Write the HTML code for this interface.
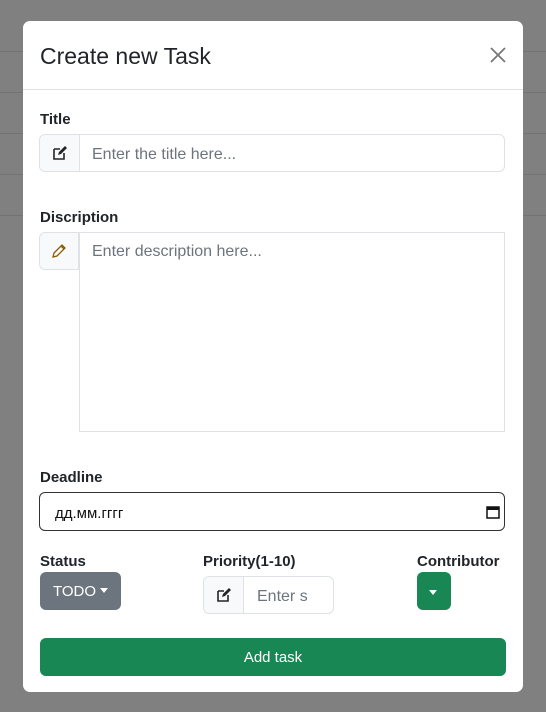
<!DOCTYPE html>
<html><head><meta charset="utf-8"><style>
*{box-sizing:border-box;margin:0;padding:0}
body{width:546px;height:712px;background:#808080;font-family:"Liberation Sans","DejaVu Sans",sans-serif;position:relative;overflow:hidden;color:#212529}
.ln{position:absolute;left:0;width:546px;height:1px;background:#737373}
.modal{position:absolute;left:23px;top:21px;width:500px;height:671px;background:#fff;border-radius:7px}
.a{position:absolute}
.lbl{position:absolute;font-weight:bold;font-size:15px;color:#212529}
.grp{position:absolute;border:1px solid #dee2e6;border-radius:6px;background:#fff}
.ico{position:absolute;left:0;top:0;bottom:0;width:40px;background:#f8f9fa;border-right:1px solid #dee2e6;border-radius:6px 0 0 6px;display:flex;align-items:center;justify-content:center}
.ph{position:absolute;color:#6c757d;font-size:16px}
</style></head><body>
<div class="ln" style="top:51px"></div><div class="ln" style="top:92px"></div><div class="ln" style="top:133px"></div><div class="ln" style="top:174px"></div><div class="ln" style="top:215px"></div>
<div class="modal">
 <div class="a" style="left:17px;top:22px;font-size:23px;color:#212529">Create new Task</div>
 <svg class="a" style="left:466px;top:25px" width="18" height="18" viewBox="0 0 18 18"><path d="M2 2L16 16M16 2L2 16" stroke="#777" stroke-width="1.8"/></svg>
 <div class="a" style="left:0;top:68px;width:500px;height:1px;background:#dee2e6"></div>
 <div class="lbl" style="left:17px;top:90px">Title</div>
 <div class="grp" style="left:16px;top:113px;width:466px;height:38px"><div class="ico"><svg width="14" height="14" viewBox="0 0 14 14"><path d="M1 3h6M1 3v10h10V7" fill="none" stroke="#212529" stroke-width="1.6"/><path d="M5 9l1-3 6-6 2 2-6 6z" fill="#212529"/></svg></div><div class="ph" style="left:52px;top:11px">Enter the title here...</div></div>
 <div class="lbl" style="left:17px;top:188px">Discription</div>
 <div class="grp" style="left:16px;top:211px;width:467px;height:200px;border:none"><div class="ico" style="bottom:auto;height:38px;border:1px solid #dee2e6"><svg width="16" height="16" viewBox="0 0 16 16"><path d="M2 14l1-4 8-8 3 3-8 8z M10 3l3 3" fill="none" stroke="#8a5a00" stroke-width="1.3"/></svg></div><div class="a" style="left:40px;top:0;width:426px;height:200px;border:1px solid #dee2e6"></div><div class="ph" style="left:53px;top:11px">Enter description here...</div></div>
 <div class="lbl" style="left:17px;top:448px">Deadline</div>
 <div class="a" style="left:16px;top:471px;width:466px;height:39px;border:1px solid #333;border-radius:6px"><div class="a" style="left:15px;top:12px;font-size:15px;color:#111">дд.мм.гггг</div><svg class="a" style="left:446px;top:12px" width="14" height="14" viewBox="0 0 14 14"><rect x="1" y="2" width="12" height="11" fill="none" stroke="#111" stroke-width="1.5"/><rect x="1" y="2" width="12" height="3" fill="#111"/></svg></div>
 <div class="lbl" style="left:17px;top:532px">Status</div>
 <div class="a" style="left:17px;top:551px;width:81px;height:38px;background:#6c757d;border-radius:6px;color:#fff;font-size:15px;padding:11px 0 0 13px">TODO <span style="display:inline-block;border:4.5px solid transparent;border-top:5px solid #fff;border-bottom:0;vertical-align:3px"></span></div>
 <div class="lbl" style="left:180px;top:532px">Priority(1-10)</div>
 <div class="grp" style="left:180px;top:555px;width:131px;height:38px;overflow:hidden"><div class="ico"><svg width="14" height="14" viewBox="0 0 14 14"><path d="M1 3h6M1 3v10h10V7" fill="none" stroke="#212529" stroke-width="1.6"/><path d="M5 9l1-3 6-6 2 2-6 6z" fill="#212529"/></svg></div><div class="ph" style="left:53px;top:11px;width:50px;overflow:hidden;white-space:nowrap">Enter some</div></div>
 <div class="lbl" style="left:394px;top:532px">Contributor</div>
 <div class="a" style="left:394px;top:551px;width:34px;height:38px;background:#198754;border-radius:6px"><span class="a" style="left:12px;top:18px;border:4.5px solid transparent;border-top:5px solid #fff;border-bottom:0"></span></div>
 <div class="a" style="left:17px;top:617px;width:466px;height:38px;background:#198754;border-radius:6px;color:#fff;font-size:15px;text-align:center;line-height:40px">Add task</div>
</div>
</body></html>
